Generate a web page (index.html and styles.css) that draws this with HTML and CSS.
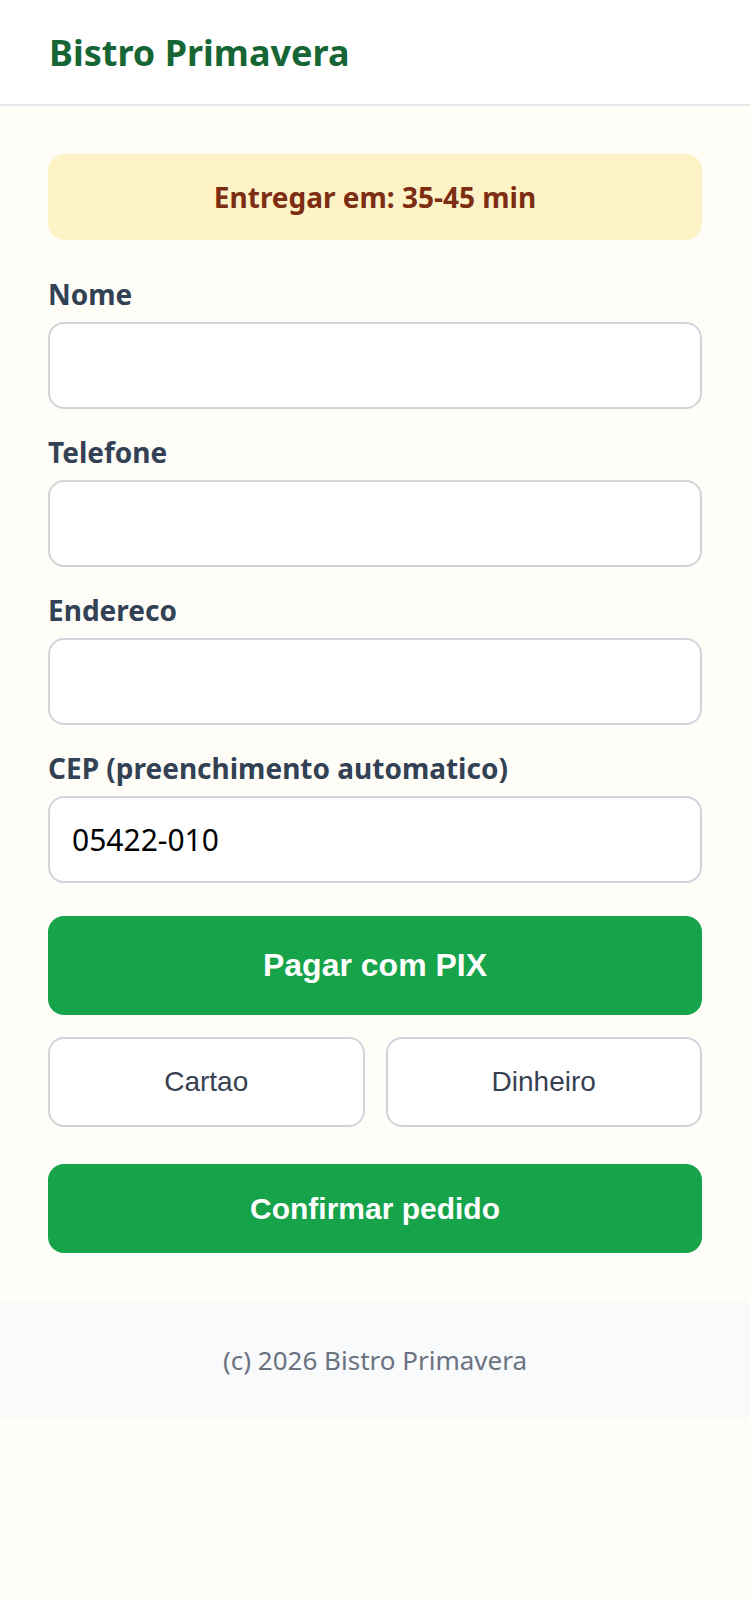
FILE: index.html
```html
<!DOCTYPE html>
<html lang="pt-BR">
<head>
    <meta charset="UTF-8">
    <meta name="viewport" content="width=device-width, initial-scale=1.0">
    <title>Bistro Primavera</title>
    <link rel="stylesheet" href="styles.css">
</head>
<body>

    <header class="top-bar">
        <h1>Bistro Primavera</h1>
    </header>

    <main class="checkout">
        <div class="eta-banner">Entregar em: 35-45 min</div>

        <form class="order-form" onsubmit="return false;">
            <div class="field">
                <label for="nome">Nome</label>
                <input type="text" id="nome">
            </div>
            <div class="field">
                <label for="telefone">Telefone</label>
                <input type="tel" id="telefone">
            </div>
            <div class="field">
                <label for="endereco">Endereco</label>
                <input type="text" id="endereco">
            </div>
            <div class="field">
                <label for="cep">CEP (preenchimento automatico)</label>
                <input type="text" id="cep" value="05422-010">
            </div>

            <button type="button" class="btn btn-primary btn-pix">Pagar com PIX</button>
            <div class="pay-options">
                <button type="button" class="btn btn-outline">Cartao</button>
                <button type="button" class="btn btn-outline">Dinheiro</button>
            </div>
            <button type="submit" class="btn btn-primary btn-confirm">Confirmar pedido</button>
        </form>
    </main>

    <footer class="site-footer">(c) 2026 Bistro Primavera</footer>

</body>
</html>
```

FILE: styles.css
```css
body {
    margin: 0;
    font-family: "Noto Sans", "Open Sans", sans-serif;
    background-color: #fffdf8;
    color: #334155;
}

.top-bar {
    background: #ffffff;
    border-bottom: 2px solid #e5e7eb;
    height: 104px;
    padding: 0 49px;
    display: flex;
    align-items: center;
}
.top-bar h1 {
    margin: 0;
    font-size: 36px;
    font-weight: 700;
    color: #166534;
}

.checkout {
    padding: 48px 48px 49px;
}

.eta-banner {
    background: #fef3c7;
    color: #7c2d12;
    border-radius: 16px;
    height: 86px;
    display: flex;
    justify-content: center;
    align-items: center;
    font-size: 28px;
    font-weight: 700;
}

.order-form {
    margin-top: 36px;
    display: flex;
    flex-direction: column;
}

.field {
    display: flex;
    flex-direction: column;
    margin-bottom: 25px;
}
.field label {
    font-size: 28px;
    line-height: 36px;
    font-weight: 700;
    color: #334155;
    margin-bottom: 10px;
}
.field input {
    height: 87px;
    box-sizing: border-box;
    border: 2px solid #d1d5db;
    border-radius: 16px;
    background: #ffffff;
    padding: 0 22px;
    font-family: "Noto Sans", sans-serif;
    font-size: 30px;
    color: #000000;
}

.btn {
    font-family: "Liberation Sans", Arial, sans-serif;
    border-radius: 16px;
    cursor: pointer;
}
.btn-primary {
    background: #16a34a;
    color: #ffffff;
    border: none;
    font-weight: 700;
}
.btn-pix {
    margin-top: 8px;
    height: 99px;
    font-size: 32px;
}
.pay-options {
    display: grid;
    grid-template-columns: 1fr 1fr;
    gap: 21px;
    margin-top: 22px;
}
.btn-outline {
    background: #ffffff;
    border: 2px solid #d1d5db;
    color: #374151;
    height: 90px;
    font-size: 28px;
}
.btn-confirm {
    margin-top: 37px;
    height: 89px;
    font-size: 30px;
}

.site-footer {
    background: #f8fafc;
    height: 116px;
    display: flex;
    justify-content: center;
    align-items: center;
    font-size: 26px;
    color: #6b7280;
}
```
